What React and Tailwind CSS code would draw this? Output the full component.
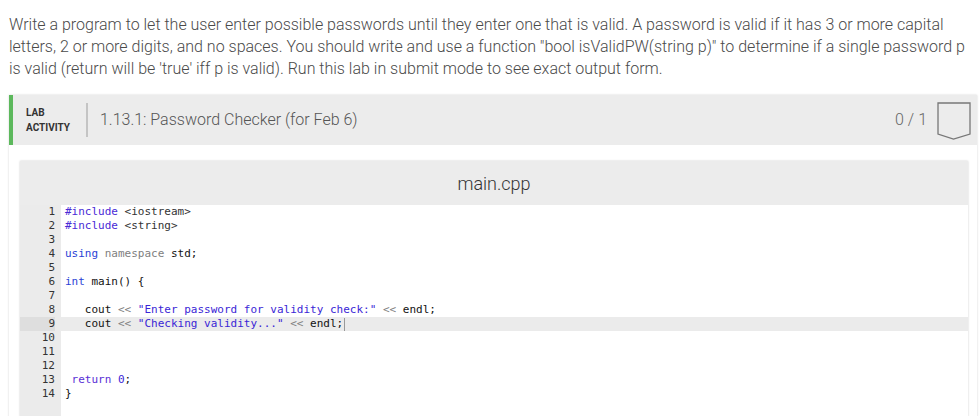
const lines = [
  [["#include", "text-[#4a2ad6]"], [" <iostream>", "text-[#333]"]],
  [["#include", "text-[#4a2ad6]"], [" <string>", "text-[#333]"]],
  [],
  [["using", "text-[#2a3fd6]"], [" namespace", "text-[#808080]"], [" std;", "text-[#111]"]],
  [],
  [["int", "text-[#2a3fd6]"], [" main() {", "text-[#111]"]],
  [],
  [
    ["   cout ", "text-[#111]"],
    ["<<", "text-[#808080]"],
    [' "Enter password for validity check:"', "text-[#3a26d6]"],
    [" ", ""],
    ["<<", "text-[#808080]"],
    [" endl;", "text-[#111]"],
  ],
  [
    ["   cout ", "text-[#111]"],
    ["<<", "text-[#808080]"],
    [' "Checking validity..."', "text-[#3a26d6]"],
    [" ", ""],
    ["<<", "text-[#808080]"],
    [" endl;", "text-[#111]"],
  ],
  [],
  [],
  [],
  [[" return", "text-[#5a30d6]"], [" 0", "text-[#3a26d6]"], [";", "text-[#111]"]],
  [["}", "text-[#111]"]],
];

export default function App() {
  return (
    <div className="min-h-screen bg-white pl-[9px] pr-[2px] font-['Roboto',sans-serif]">
      <p className="pt-[14px] text-[16px] font-light leading-[22px] text-[#4a4a4a]">
        Write a program to let the user enter possible passwords until they enter one that is valid. A password is valid if it has 3 or more capital
        <br />
        letters, 2 or more digits, and no spaces. You should write and use a function "bool isValidPW(string p)" to determine if a single password p
        <br />
        is valid (return will be 'true' iff p is valid). Run this lab in submit mode to see exact output form.
      </p>

      <div className="mt-[15px] shadow-[0_0_2px_rgba(0,0,0,0.18)]">
        <div className="flex h-[50px] items-center border-l-4 border-[#5cb85c] bg-[#ececec]">
          <div className="pl-[13px] text-[10px] font-bold uppercase leading-[15px] text-[#333]">
            <div>Lab</div>
            <div>Activity</div>
          </div>
          <div className="ml-[16px] h-[34px] w-[2px] bg-[#c4c4c4]" />
          <div className="ml-[12px] text-[16px] font-light text-[#555]">
            1.13.1: Password Checker (for Feb 6)
          </div>
          <div className="ml-auto text-[16px] font-light text-[#666]">0 / 1</div>
          <svg className="ml-[10px] mr-[6px] mt-[2px]" width="34" height="38" viewBox="0 0 34 38">
            <path d="M1 1 H33 V32 L16.5 37 L1 32 Z" fill="none" stroke="#777" strokeWidth="1.3" />
          </svg>
        </div>

        <div className="pl-[11px] pr-[9px] pt-[16px]">
          <div className="h-[256px] overflow-hidden shadow-[0_0_2px_rgba(0,0,0,0.2)]">
            <div className="flex h-[44px] items-center justify-center bg-[#ececec] text-[18px] font-light text-[#333]">
              main.cpp
            </div>
            <div className="flex h-full font-['DejaVu_Sans_Mono',monospace] text-[11px] leading-[14px]">
              <div className="w-[41px] shrink-0 bg-[#ebebeb] pr-[6px] text-right text-[#333]">
                {lines.map((_, i) => (
                  <div key={i} className={i === 8 ? "bg-[#dedede]" : ""}>
                    {i + 1}
                  </div>
                ))}
              </div>
              <div className="flex-1 bg-white">
                {lines.map((segs, i) => (
                  <div
                    key={i}
                    className={`h-[14px] whitespace-pre pl-[4px] ${i === 8 ? "bg-[#ebebeb]" : ""}`}
                  >
                    {segs.map(([t, c], j) => (
                      <span key={j} className={c}>
                        {t}
                      </span>
                    ))}
                    {i === 8 && <span className="ml-px inline-block h-[13px] w-px bg-[#999] align-middle" />}
                  </div>
                ))}
              </div>
            </div>
          </div>
        </div>
      </div>
    </div>
  );
}
